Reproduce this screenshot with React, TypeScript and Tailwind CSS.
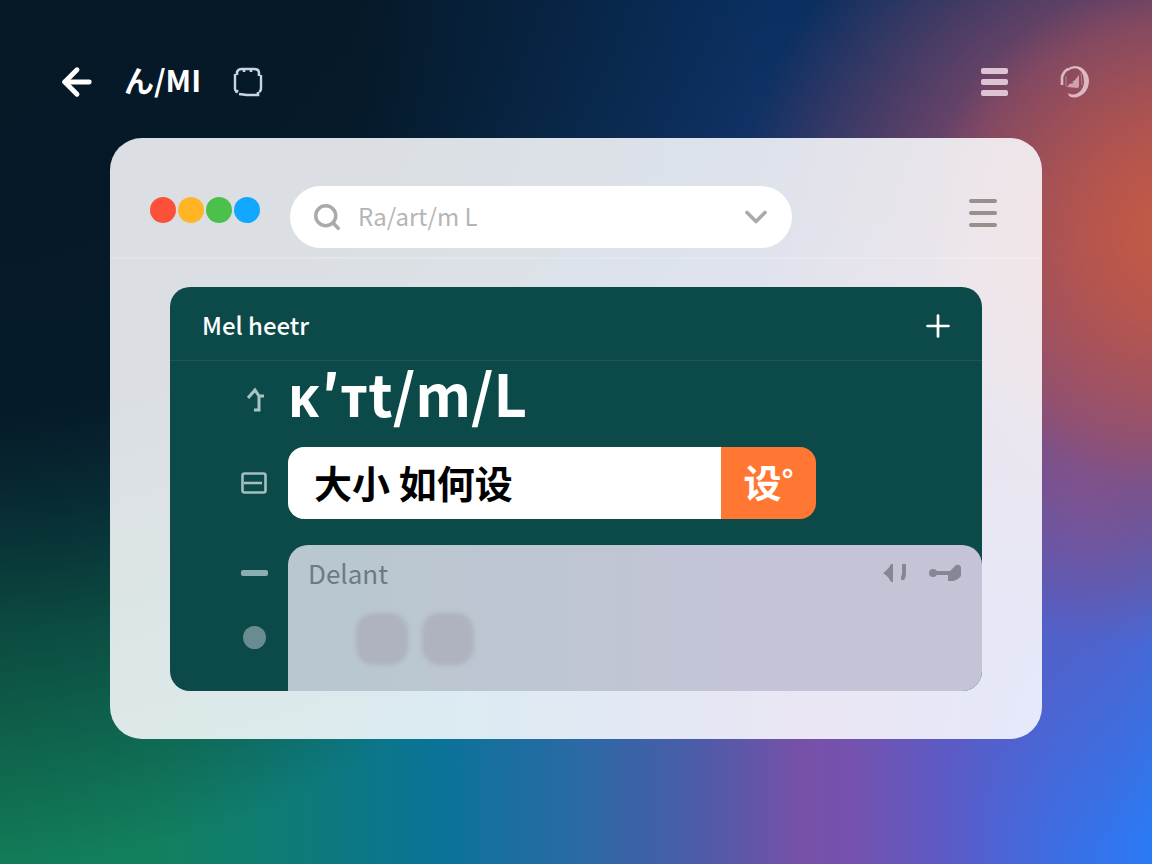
import React from 'react';
import { ArrowLeft, ChevronDown, Plus, Search } from 'lucide-react';
import { clsx } from 'clsx';

const dots = ['bg-[#fb513b]', 'bg-[#ffb524]', 'bg-[#4bc04b]', 'bg-[#12a8ff]'];

function FrameIcon() {
    return (
        <svg viewBox="0 0 30 32" className="h-8 w-[30px]" fill="none" stroke="currentColor" strokeWidth="2.4">
            <path d="M4 9V6q1-3 5-3h12q5 0 5 4v3M11 3v3M18 3v3" strokeWidth="2.6" />
            <path d="M2 8v15q0 2 2 3M28 9v13q0 3-2 4" />
            <path d="M3 25l2 1" strokeWidth="3.5" />
            <path d="M6 28l8 1M13 29h12v-3" strokeWidth="2.6" />
        </svg>
    );
}

function ProfileIcon() {
    return (
        <svg viewBox="0 0 30 34" className="h-[34px] w-[30px]" fill="none" stroke="currentColor">
            <path d="M2 20V12Q4 6 8 4" strokeWidth="2.6" />
            <path d="M7 4Q11 1 15 1Q22 1 26 7Q29 11 29 17Q28 27 20 31Q14 34 9 31L8 28Q13 31 18 28Q24 24 24 17Q24 7 18 4Q13 2 8 6Z" fill="currentColor" stroke="none" />
            <path d="M12 17l3-2 4-5v11l-1 2-10-1 1-3 5-1z" fill="currentColor" fillOpacity="0.8" stroke="none" />
            <path d="M6 11v10l3 1M21 8l1 12" strokeWidth="1" strokeOpacity="0.5" />
        </svg>
    );
}

function TurnUpIcon() {
    return (
        <svg viewBox="0 0 18 26" className="h-[26px] w-[18px]" fill="none" stroke="currentColor" strokeWidth="3">
            <path d="M1 11L8 3l4 6h5M12 8v15H7" />
        </svg>
    );
}

function CardIcon() {
    return (
        <svg viewBox="0 0 26 22" className="h-[22px] w-[26px]" fill="none" stroke="currentColor" strokeWidth="2.6">
            <rect x="1.5" y="1.5" width="23" height="19" rx="2" />
            <path d="M3 11h18" />
        </svg>
    );
}

function SkipIcon() {
    return (
        <svg viewBox="0 0 26 22" className="h-[22px] w-[26px]" fill="currentColor">
            <path d="M1 11Q6 8 9 2l2 0v18l-2 0Q6 14 1 11Z" />
            <path d="M20 2h4v9q0 5-2 7h-3v-3l1-3V4z" />
        </svg>
    );
}

function KeyIcon() {
    return (
        <svg viewBox="0 0 34 22" className="h-[22px] w-[34px]" fill="currentColor">
            <circle cx="5" cy="11" r="4" />
            <path d="M7 9h15l6-6q4-1 5 2v9q-3 4-8 5l-5 0v-6H7z" />
        </svg>
    );
}

interface MenuIconProps {
    className?: string;
    barClassName: string;
}

function MenuIcon({ className, barClassName }: MenuIconProps) {
    return (
        <span className={clsx('flex flex-col', className)}>
            <span className={barClassName} />
            <span className={barClassName} />
            <span className={barClassName} />
        </span>
    );
}

function TopNav() {
    return (
        <header className="flex items-center pt-[50px] pr-[62px] pb-6 pl-[60px] text-white">
            <button type="button" aria-label="Back">
                <ArrowLeft className="-mx-1 h-[42px] w-[42px]" strokeWidth={2.8} />
            </button>
            <span className="ml-[30px] h-16 text-[30px] leading-[58px] font-bold">ん/MI</span>
            <button type="button" aria-label="Frame" className="ml-8 text-slate-300">
                <FrameIcon />
            </button>
            <button type="button" aria-label="Menu" className="ml-auto">
                <MenuIcon className="gap-[5px]" barClassName="h-[6px] w-[27px] rounded-xs bg-[#dcc4d4]" />
            </button>
            <button type="button" aria-label="Profile" className="ml-[52px] text-[#dcb9c2]">
                <ProfileIcon />
            </button>
        </header>
    );
}

function WindowBar() {
    return (
        <div className="flex items-start border-b-2 border-white/20 pt-12 pr-[45px] pb-[9px] pl-10">
            <div className="flex h-12 shrink-0 items-center gap-[2px]">
                {dots.map((color) => (
                    <span key={color} className={clsx('h-[26px] w-[26px] rounded-full', color)} />
                ))}
            </div>
            <div className="ml-[30px] flex h-[62px] max-w-[502px] flex-1 items-center rounded-full bg-white pr-5 pl-[22px] text-[#aaaaaa]">
                <Search className="h-[30px] w-[30px] shrink-0" strokeWidth={2.8} />
                <input
                    type="text"
                    aria-label="Search"
                    placeholder="Ra/art/m L"
                    className="ml-4 min-w-0 flex-1 bg-transparent pb-[2px] text-2xl outline-none placeholder:text-[#b5b5b5]"
                />
                <button type="button" aria-label="Expand">
                    <ChevronDown className="-mr-[2px] h-9 w-9" strokeWidth={2.4} />
                </button>
            </div>
            <button type="button" aria-label="Window menu" className="ml-auto flex h-[54px] items-center">
                <MenuIcon className="gap-2" barClassName="h-1 w-7 rounded-xs bg-[#96908f]" />
            </button>
        </div>
    );
}

function DetailPanel() {
    return (
        <section className="h-[146px] rounded-t-[20px] bg-linear-to-r from-[#b9c7d0] from-10% to-[#c5c4d7] to-75% px-5 pt-3">
            <div className="flex items-center text-[#6d7a84]">
                <h3 className="text-[26px] leading-8">Delant</h3>
                <button type="button" aria-label="Previous" className="ml-auto text-[#858796]">
                    <SkipIcon />
                </button>
                <button type="button" aria-label="Key" className="ml-5 text-[#858796]">
                    <KeyIcon />
                </button>
            </div>
            <div className="mt-6 ml-12 flex gap-[14px]">
                <span className="h-[52px] w-[52px] rounded-[18px] bg-[#aeb3bf] blur-[2px]" />
                <span className="h-[52px] w-[52px] rounded-[18px] bg-[#aeb3bf] blur-[2px]" />
            </div>
        </section>
    );
}

function Workspace() {
    return (
        <section className="mx-[60px] mt-7 mb-[47px] overflow-hidden rounded-[20px] bg-[#0b4a49]">
            <div className="flex h-[74px] items-center border-b border-white/7 px-8 pt-1 text-white">
                <h2 className="pb-[2px] text-2xl font-medium">Mel heetr</h2>
                <button type="button" aria-label="Add" className="ml-auto">
                    <Plus className="-m-[6px] h-9 w-9" strokeWidth={1.8} />
                </button>
            </div>
            <div className="grid grid-cols-[118px_1fr]">
                <div className="flex items-center justify-center pb-2 pl-[54px] text-[#a9c4c4]">
                    <TurnUpIcon />
                </div>
                <h1 className="h-[86px] text-[58px] leading-[62px] font-bold text-white">ᴋ′ᴛt/m/L</h1>

                <div className="flex items-center justify-center pl-[50px] text-[#a3bfc1]">
                    <CardIcon />
                </div>
                <form className="flex h-[72px] max-w-[528px] overflow-hidden rounded-2xl" onSubmit={(e) => e.preventDefault()}>
                    <input
                        type="text"
                        aria-label="Size"
                        defaultValue="大小 如何设"
                        className="min-w-0 flex-1 bg-white px-[26px] pb-1 text-[38px] font-bold text-black outline-none"
                    />
                    <button type="submit" className="w-[95px] bg-[#ff7733] pb-1 text-[38px] leading-[56px] font-bold text-white">
                        设<span className="align-top text-3xl leading-[52px]">°</span>
                    </button>
                </form>

                <div className="mt-[26px] flex flex-col items-center gap-[50px] pt-[25px] pl-[50px]">
                    <span className="h-[6px] w-[27px] rounded-xs bg-[#8caeb0]" />
                    <span className="h-[23px] w-[23px] rounded-full bg-[#698c90]" />
                </div>
                <div className="mt-[26px]">
                    <DetailPanel />
                </div>
            </div>
        </section>
    );
}

export default function App() {
    return (
        <div className="min-h-screen bg-[#0b4668] bg-[radial-gradient(ellipse_24%_30%_at_104%_27%,#c85c42_0%,#c45a46b0_40%,#c05a4a00_100%),radial-gradient(ellipse_38%_48%_at_102%_27%,#a04a58_0%,#984c68c0_50%,#80508000_100%),radial-gradient(ellipse_20%_40%_at_94%_58%,#6058b8_0%,#6058b800_100%),radial-gradient(ellipse_66%_100%_at_0%_0%,#051826_0%,#051826f2_48%,#05182600_100%),linear-gradient(180deg,#0a2f60_0%,#0a2f60e0_25%,#0a2f6000_72%),linear-gradient(90deg,#127c58_0%,#12805f_14%,#0e7a7a_27%,#0a7398_38%,#2a6aa5_50%,#4a5ca8_60%,#7850a8_70%,#7452ae_74%,#5a5cc8_83%,#3c6ee4_92%,#2a7af4_100%)] font-['Noto_Sans_CJK_SC','Noto_Sans',sans-serif]">
            <TopNav />
            <main className="mx-[110px] rounded-[32px] bg-[#fcfdff]/87 pb-px">
                <WindowBar />
                <Workspace />
            </main>
        </div>
    );
}
